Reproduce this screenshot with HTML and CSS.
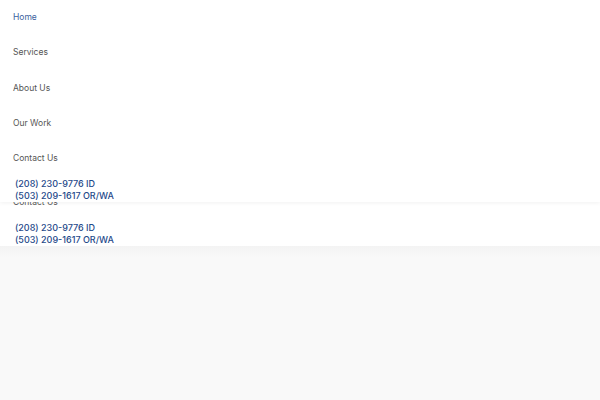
FILE: index.html
```html
<!DOCTYPE html>
<html lang="en">
<head>
    <meta charset="UTF-8">
    <meta name="viewport" content="width=device-width, initial-scale=1.0">
    <title>Menu</title>
    <link rel="stylesheet" href="styles.css">
</head>
<body>

    <!-- Header menu (in flow) -->
    <header class="header">
        <nav class="menu">
            <ul class="menu-list">
                <li><a href="#" class="active">Home</a></li>
                <li><a href="#">Services</a></li>
                <li><a href="#">About Us</a></li>
                <li><a href="#">Our Work</a></li>
                <li><a href="#">Contact Us</a></li>
            </ul>
            <div class="phones">
                <a href="#">(208) 230-9776 ID</a>
                <a href="#">(503) 209-1617 OR/WA</a>
            </div>
        </nav>
    </header>

    <div class="menu-drop">
        <nav class="menu">
            <ul class="menu-list">
                <li><a href="#" class="active">Home</a></li>
                <li><a href="#">Services</a></li>
                <li><a href="#">About Us</a></li>
                <li><a href="#">Our Work</a></li>
                <li><a href="#">Contact Us</a></li>
            </ul>
            <div class="phones">
                <a href="#">(208) 230-9776 ID</a>
                <a href="#">(503) 209-1617 OR/WA</a>
            </div>
        </nav>
    </div>

    <main class="content"></main>

</body>
</html>
```

FILE: styles.css
```css
body {
    margin: 0;
    font-family: Inter, "Open Sans", sans-serif;
    background-color: #f9f9f9;
}
.header {
    background: white;
    padding-top: 44px;
}
.menu-drop {
    position: absolute;
    top: 0;
    left: 0;
    right: 0;
    height: 202px;
    overflow: hidden;
    background: white;
    box-shadow: 0 1px 4px rgba(0, 0, 0, 0.06);
    z-index: 10;
}
.menu-list {
    list-style-type: none;
    margin: 0;
    padding: 0;
}
.menu-list a {
    display: block;
    padding: 12px 13px;
    font-size: 8.5px;
    line-height: 11.3px;
    color: #555;
    text-decoration: none;
}
.menu-list a.active {
    color: #3b5f9e;
}
.phones {
    display: flex;
    flex-direction: column;
    padding: 2px 15px 0;
}
.phones a {
    font-size: 9px;
    line-height: 12px;
    font-weight: 500;
    color: #1f4a8a;
    text-decoration: none;
}
.content {
    height: 160px;
    background: linear-gradient(#f3f3f3, #f9f9f9 12px);
}
```
